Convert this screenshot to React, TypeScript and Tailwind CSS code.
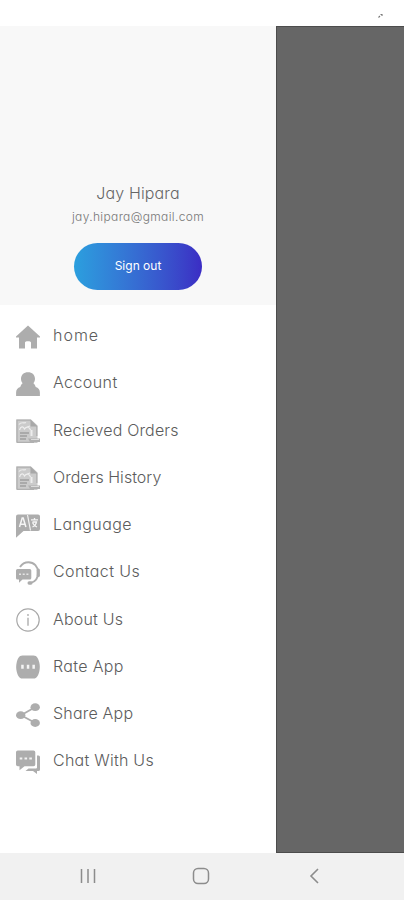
import React from "react";

const HomeIcon = () => (
  <path d="M12 0.4 L24 11.4 V12.4 H21 V23.6 H15 V17.4 C15 15.8 9 15.8 9 17.4 V23.6 H3 V12.4 H0 V11.4 Z" />
);

const AccountIcon = () => (
  <path d="M12 0.300c4.200 0 7 2.700 7 6.500 0 1.700-.6 3.200-1.600 4.400 1.200 1 2 2.300 2.300 3.800 2.600.8 4.200 2.700 4.200 5.500V24H.1v-3.500c0-2.800 1.600-4.700 4.200-5.500.3-1.500 1.100-2.800 2.300-3.800C5.600 10 5 8.500 5 6.800 5 3 7.800.3 12 .3z" />
);

const OrdersIcon = () => (
  <>
    <path d="M0.300 0.500H15l6.500 6V24H.3z" fill="#cbcbcb" />
    <path d="M1 23.300V1.200h13.500l6.300 6V17M1 23.300h17" fill="none" stroke="#b0b0b0" strokeWidth="1.300" />
    <path d="M14.500 1v6.500h6.500z" fill="#a8a8a8" />
    <path d="M3 5.500c2-3 5-1 7-2M3.500 11c1-4 4-4 5-1 2-3 5-2 6 1M11 8l3-1" fill="none" stroke="#eee" strokeWidth="1.200" />
    <path d="M4 14h9M4 17h7M4 20h6" stroke="#a0a0a0" strokeWidth="1.700" />
    <path d="M15.500 11v6" stroke="#ededed" strokeWidth="2" />
    <path d="M12 19.500h12v3.500h-10z" fill="#b0b0b0" />
    <path d="M15 20.500h8" stroke="#dcdcdc" strokeWidth="1" />
  </>
);

const LanguageIcon = () => (
  <>
    <path d="M2 .5h20a2 2 0 0 1 2 2v12.500a2 2 0 0 1-2 2H7.500L0 23.800V2.500a2 2 0 0 1 2-2z" />
    <path d="M11.500 1l3 15.500" stroke="#f2f2f2" strokeWidth="1.200" />
    <path d="M3.500 13l2.700-9h1l2.700 9M4.500 10.200h4.300" fill="none" stroke="#f5f5f5" strokeWidth="1.500" />
    <path d="M15 5.800h7M18.500 4v2M16.500 8h4c-.4 2.500-2 4-4 5M16.500 8.500c.8 2.200 2.200 3.600 4.500 4.500" fill="none" stroke="#f5f5f5" strokeWidth="1.300" />
  </>
);

const ContactIcon = () => (
  <>
    <path d="M4 6C6 2.800 9 1.200 12.500 1.200c5.500 0 9.600 4.600 9.600 10.300 0 5-2.600 9.300-7.600 10.500" fill="none" stroke="#adadad" strokeWidth="1.900" />
    <rect x="20.600" y="7.500" width="3.300" height="8.500" rx="1.500" />
    <rect x="11.500" y="20.300" width="5" height="3.400" rx="1.600" />
    <path d="M1.500 8h12.300a1.500 1.500 0 0 1 1.500 1.500v7.500a1.500 1.500 0 0 1-1.500 1.500H6.500L3 21.800v-3.300H1.500A1.500 1.500 0 0 1 0 17V9.500A1.500 1.500 0 0 1 1.500 8z" />
    <path d="M3 13.300h2M6.700 13.300h2M10.400 13.300h2" stroke="#e6e6e6" strokeWidth="1.500" />
  </>
);

const AboutIcon = () => (
  <>
    <circle cx="12" cy="12" r="11.200" fill="none" stroke="#a8a8a8" strokeWidth="1.200" />
    <circle cx="12" cy="7" r="0.900" />
    <path d="M12 9.700v8" stroke="#a8a8a8" strokeWidth="1.300" />
  </>
);

const RateIcon = () => (
  <>
    <path d="M6.500 .4h11C21 .4 22.500 4 23.300 7.500c.7 3 .7 6 0 9-.8 3.500-2.300 7.100-5.800 7.100h-11C3 23.600 1.500 20 .7 16.500c-.7-3-.7-6 0-9C1.500 4 3 .4 6.500 .4z" />
    <path d="M5.200 9.800h2.500v4H5.200zM10.800 9.800h2.500v4h-2.500zM16.400 9.800h2.500v4h-2.500z" fill="#f4f4f4" />
  </>
);

const ShareIcon = () => (
  <>
    <path d="M19 4.200L5 12.200l14 7.600" fill="none" stroke="#adadad" strokeWidth="1.800" />
    <ellipse cx="19.200" cy="4.200" rx="4.700" ry="3.900" />
    <ellipse cx="4.700" cy="12.200" rx="4.700" ry="3.900" />
    <ellipse cx="19.200" cy="20" rx="4.700" ry="3.900" />
  </>
);

const ChatIcon = () => (
  <>
    <path d="M1.800 .5h15.700a1.800 1.800 0 0 1 1.800 1.800v12.200a1.800 1.800 0 0 1-1.800 1.800H8.500l-5 4v-4H1.800A1.800 1.800 0 0 1 0 14.500V2.300A1.800 1.800 0 0 1 1.800 .5z" />
    <path d="M21 5.500h1.500A1.500 1.500 0 0 1 24 7v12.500a1.500 1.500 0 0 1-1.500 1.500H21v3l-4-3H9.500l3-2.600H20a1 1 0 0 0 1-1z" />
    <path d="M3.700 8.500h2.600M8.500 8.500h2.600M13.300 8.500h2.600" stroke="#f2f2f2" strokeWidth="2.200" />
  </>
);

const menu = [
  { label: "home", icon: HomeIcon, tracking: "tracking-[1px]" },
  { label: "Account", icon: AccountIcon, tracking: "tracking-[0.42px]" },
  { label: "Recieved Orders", icon: OrdersIcon, tracking: "tracking-[0.15px]" },
  { label: "Orders History", icon: OrdersIcon, tracking: "tracking-[0.03px]" },
  { label: "Language", icon: LanguageIcon, tracking: "tracking-[0.4px]" },
  { label: "Contact Us", icon: ContactIcon, tracking: "tracking-[0.4px]" },
  { label: "About Us", icon: AboutIcon, tracking: "tracking-[0.2px]" },
  { label: "Rate App", icon: RateIcon, tracking: "tracking-[0.35px]" },
  { label: "Share App", icon: ShareIcon, tracking: "tracking-[0.2px]" },
  { label: "Chat With Us", icon: ChatIcon, tracking: "tracking-[0.25px]" },
];

export default function App() {
  return (
    <div className="flex flex-col w-full h-[900px] bg-white overflow-hidden font-['Inter',sans-serif] font-light [font-feature-settings:'cv11']">
      {/* Status bar */}
      <div className="h-[26px] shrink-0 flex justify-end pr-[21px] pt-[13px]">
        <svg width="5" height="5" viewBox="0 0 5 5">
          <path d="M0.500 4.500L2 3M2.500 1.500H4V3" fill="none" stroke="#777" strokeWidth="1.100" />
        </svg>
      </div>

      <div className="flex flex-1 min-h-0">
        {/* Drawer */}
        <div className="w-[276px] flex flex-col bg-white">
          <div className="h-[279px] shrink-0 bg-[#f8f8f8] flex flex-col items-center">
            <div className="mt-[156px] text-[16px] leading-[22px] text-[#666] tracking-[0.15px]">Jay Hipara</div>
            <div className="mt-[4px] text-[12px] leading-[18px] text-[#777] tracking-[0.35px]">jay.hipara@gmail.com</div>
            <button className="mt-[17px] w-[128px] h-[47px] rounded-full bg-linear-to-r from-[#2b9fde] to-[#3b2cc4] text-white text-[12px] font-normal pb-[2px]">
              Sign out
            </button>
          </div>
          <div className="pt-2 flex flex-col">
            {menu.map((item) => (
              <div key={item.label} className="h-[47.250px] pl-4 flex items-center gap-[13px]">
                <svg width="24" height="24" viewBox="0 0 24 24" fill="#adadad" className="shrink-0">
                  <item.icon />
                </svg>
                <span className={`text-[16px] leading-6 pb-[3px] text-[#5c5c5c] whitespace-nowrap ${item.tracking}`}>
                  {item.label}
                </span>
              </div>
            ))}
          </div>
        </div>
        {/* Overlay */}
        <div className="flex-1 bg-[#666] border-l border-t border-b border-[#4c4c4c]" />
      </div>

      {/* Navigation bar */}
      <div className="h-[47px] shrink-0 bg-[#f1f1f1] flex items-center pl-[80px] pb-[2px]">
        <svg width="16" height="16" viewBox="0 0 16 16" fill="none" stroke="#8c8c8c" strokeWidth="1.500">
          <path d="M1.500 1v14M8 1v14M14.500 1v14" />
        </svg>
        <svg width="18" height="18" viewBox="0 0 18 18" fill="none" stroke="#8c8c8c" strokeWidth="1.500" className="ml-[96px]">
          <rect x="1.500" y="1.500" width="15" height="15" rx="4.500" />
        </svg>
        <svg width="10" height="16" viewBox="0 0 10 16" fill="none" stroke="#8c8c8c" strokeWidth="1.600" className="ml-[99px]">
          <path d="M9 1L2 8l7 7" />
        </svg>
      </div>
    </div>
  );
}
